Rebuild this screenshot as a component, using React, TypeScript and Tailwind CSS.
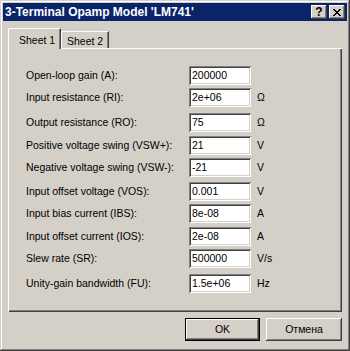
import React from 'react';

const rows = [
  { label: 'Open-loop gain (A):', value: '200000', unit: '', gap: 'mt-0' },
  { label: 'Input resistance (RI):', value: '2e+06', unit: 'Ω', gap: 'mt-[3px]' },
  { label: 'Output resistance (RO):', value: '75', unit: 'Ω', gap: 'mt-[6px]' },
  { label: 'Positive voltage swing (VSW+):', value: '21', unit: 'V', gap: 'mt-[4px]' },
  { label: 'Negative voltage swing (VSW-):', value: '-21', unit: 'V', gap: 'mt-[3px]' },
  { label: 'Input offset voltage (VOS):', value: '0.001', unit: 'V', gap: 'mt-[5px]' },
  { label: 'Input bias current (IBS):', value: '8e-08', unit: 'A', gap: 'mt-[3px]' },
  { label: 'Input offset current (IOS):', value: '2e-08', unit: 'A', gap: 'mt-[4px]' },
  { label: 'Slew rate (SR):', value: '500000', unit: 'V/s', gap: 'mt-[3px]' },
  { label: 'Unity-gain bandwidth (FU):', value: '1.5e+06', unit: 'Hz', gap: 'mt-[6px]' },
];

const raised =
  'shadow-[inset_-1px_-1px_#404040,inset_1px_1px_#ffffff,inset_-2px_-2px_#808080]';

function CloseGlyph() {
  const px: React.ReactElement[] = [];
  for (let r = 0; r < 7; r++) {
    px.push(<rect key={`a${r}`} x={r} y={r} width={2} height={1} />);
    px.push(<rect key={`b${r}`} x={6 - r} y={r} width={2} height={1} />);
  }
  return (
    <svg width="8" height="7" viewBox="0 0 8 7" shapeRendering="crispEdges" fill="#000">
      {px}
    </svg>
  );
}

function Row({ label, value, unit, gap }: (typeof rows)[number]) {
  return (
    <div className={`flex items-center h-[19px] ${gap}`}>
      <span className="w-[163px] whitespace-nowrap">{label}</span>
      <div className="w-[62px] h-[19px] bg-white flex items-center pl-[3px] shadow-[inset_1px_1px_#808080,inset_-1px_-1px_#ffffff,inset_2px_2px_#404040,inset_-2px_-2px_#d4d0c8]">
        {value}
      </div>
      <span className="ml-[6px]">{unit}</span>
    </div>
  );
}

export default function App() {
  return (
    <div
      className="w-[350px] h-[351px] bg-[#d4d0c8] p-[3px] flex flex-col text-[10.5px] text-black shadow-[inset_-1px_-1px_#404040,inset_1px_1px_#d4d0c8,inset_-2px_-2px_#808080,inset_2px_2px_#ffffff]"
      style={{ fontFamily: '"Liberation Sans", Arial, sans-serif' }}
    >
      {/* Title bar */}
      <div className="h-[18px] bg-[#0a246a] flex items-center justify-between pl-[2px] pr-[2px]">
        <span className="text-white font-bold text-[12px] whitespace-nowrap">
          3-Terminal Opamp Model 'LM741'
        </span>
        <div className="flex gap-[2px]">
          <div className={`w-[16px] h-[14px] bg-[#d4d0c8] flex items-center justify-center font-bold text-[12px] leading-none ${raised}`}>
            ?
          </div>
          <div className={`w-[16px] h-[14px] bg-[#d4d0c8] flex items-center justify-center ${raised}`}>
            <CloseGlyph />
          </div>
        </div>
      </div>

      <div className="px-[5px] flex flex-col">
        {/* Tabs */}
        <div className="mt-[7px] h-[21px] flex items-end relative z-10">
          <div className="h-[21px] w-[53px] bg-[#d4d0c8] pl-[10px] pt-[4px] rounded-tl-[2px] border-l border-t border-white border-r border-r-[#404040] shadow-[inset_-1px_0_#808080]">
            Sheet 1
          </div>
          <div className="h-[17px] w-[48px] mb-px pl-[5px] pt-[2px] rounded-tl-[2px] border-l border-t border-white border-r border-r-[#404040] shadow-[inset_-1px_0_#808080]">
            Sheet 2
          </div>
        </div>

        {/* Panel */}
        <div className="-mt-px h-[264px] pl-[18px] pt-[18px] shadow-[inset_1px_1px_#ffffff,inset_-1px_-1px_#404040,inset_-2px_-2px_#808080]">
          {rows.map((r) => (
            <Row key={r.label} {...r} />
          ))}
        </div>

        {/* Buttons */}
        <div className="mt-[6px] flex justify-end gap-[6px]">
          <div className="w-[75px] h-[23px] flex items-center justify-center border border-black shadow-[inset_-1px_-1px_#404040,inset_1px_1px_#ffffff,inset_-2px_-2px_#808080]">
            OK
          </div>
          <div className={`w-[76px] h-[23px] flex items-center justify-center ${raised}`}>
            Отмена
          </div>
        </div>
      </div>
    </div>
  );
}
